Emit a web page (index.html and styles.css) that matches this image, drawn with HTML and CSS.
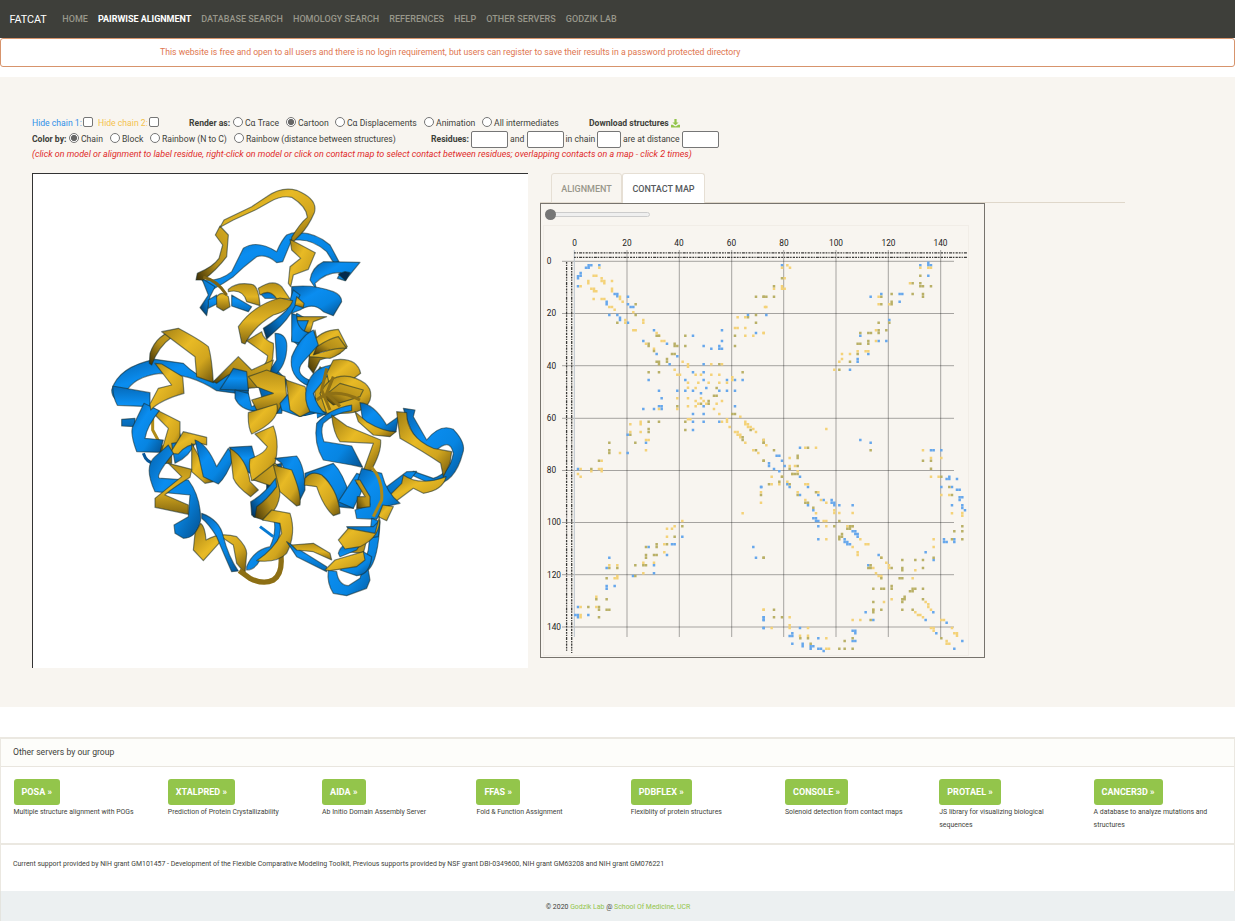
FILE: index.html
```html
<!DOCTYPE html>
<html lang="en">
<head>
<meta charset="utf-8">
<title>FATCAT</title>
<link rel="stylesheet" href="styles.css">
</head>
<body>
<nav class="navbar">
  <a class="brand">FATCAT</a>
  <a>HOME</a><a class="active">PAIRWISE ALIGNMENT</a><a>DATABASE SEARCH</a><a>HOMOLOGY SEARCH</a><a>REFERENCES</a><a>HELP</a><a>OTHER SERVERS</a><a>GODZIK LAB</a>
</nav>
<div class="alert">This website is free and open to all users and there is no login requirement, but users can register to save their results in a password protected directory</div>

<main class="stage">
  <form class="controls">
    <div class="row render">
      <label class="blue">Hide chain 1:<i class="check"></i></label>
      <label class="gold">Hide chain 2:<i class="check"></i></label>
      <b>Render as:</b>
      <label><i class="radio"></i>Cα Trace</label>
      <label><i class="radio on"></i>Cartoon</label>
      <label><i class="radio"></i>Cα Displacements</label>
      <label><i class="radio"></i>Animation</label>
      <label><i class="radio"></i>All intermediates</label>
      <b class="download">Download structures<svg width="9" height="9" viewBox="0 0 16 16"><path fill="#93c54b" d="M6 0h4v6h3.500L8 11 2.500 6H6zM0 10h3l4 3h2l4-3h3v5H0z"/></svg></b>
    </div>
    <div class="row color">
      <b>Color by:</b>
      <label><i class="radio on"></i>Chain</label>
      <label><i class="radio"></i>Block</label>
      <label><i class="radio"></i>Rainbow (N to C)</label>
      <label><i class="radio"></i>Rainbow (distance between structures)</label>
      <b>Residues:</b>
      <i class="box"></i><span>and</span><i class="box"></i><span>in chain</span><i class="box short"></i><span>are at distance</span><i class="box"></i>
    </div>
    <p class="hint">(click on model or alignment to label residue, right-click on model or click on contact map to select contact between residues; overlapping contacts on a map - click 2 times)</p>
  </form>

  <div class="panes">
    <div class="viewer">
      <svg class="protein" viewBox="0 0 1140 1260">
        <defs>
          <linearGradient id="b1" x1="0" y1="0" x2="1" y2="1"><stop offset="0" stop-color="#0561ab"/><stop offset=".35" stop-color="#0a8df0"/><stop offset=".65" stop-color="#0785e2"/><stop offset="1" stop-color="#04508f"/></linearGradient>
          <linearGradient id="b2" x1="0" y1="0" x2="0" y2="1"><stop offset="0" stop-color="#0569b8"/><stop offset=".45" stop-color="#0b90f3"/><stop offset="1" stop-color="#0668b4"/></linearGradient>
          <linearGradient id="b3" x1="1" y1="0" x2="0" y2="1"><stop offset="0" stop-color="#0a8df0"/><stop offset=".6" stop-color="#0674c8"/><stop offset="1" stop-color="#032b4e"/></linearGradient>
          <linearGradient id="g1" x1="0" y1="0" x2="1" y2="1"><stop offset="0" stop-color="#a07d13"/><stop offset=".4" stop-color="#e8ba25"/><stop offset=".7" stop-color="#d1a51e"/><stop offset="1" stop-color="#6e560d"/></linearGradient>
          <linearGradient id="g2" x1="0" y1="0" x2="0" y2="1"><stop offset="0" stop-color="#b68f18"/><stop offset=".5" stop-color="#e2b423"/><stop offset="1" stop-color="#856810"/></linearGradient>
          <linearGradient id="g3" x1="1" y1="0" x2="0" y2="1"><stop offset="0" stop-color="#d5aa20"/><stop offset=".55" stop-color="#b48e19"/><stop offset="1" stop-color="#3b2e06"/></linearGradient>
        </defs>
        <g class="ribbons">
          <!-- far side of the helices -->
          <path fill="url(#b3)" d="M590 400L625 420L625 480L600 500L575 480ZM470 600L520 560L560 600L545 700L500 700ZM600 700L660 640L680 700L640 720ZM500 860L545 850L545 900L500 930Z"/>
          <path fill="url(#g3)" d="M640 600L660 560L700 600L690 700L650 690ZM180 800L215 790L215 850L180 850ZM740 1090L800 1080L790 1120L740 1115Z"/>
          <!-- upper loops -->
          <path fill="url(#b1)" d="M306 300Q360 305 395 275L430 205Q470 178 530 215Q545 180 560 165Q580 155 600 158Q650 160 690 195L717 245L702 250L680 215Q640 180 600 180L575 180L548 245L530 248Q500 220 470 230Q430 260 400 290L370 310L335 330Z"/>
          <path fill="url(#b3)" d="M305 295L345 320L330 350L320 407L300 383L325 345Z"/>
          <path fill="url(#b2)" d="M325 360L350 345L355 370L325 385ZM395 345L455 380L445 395L395 378ZM480 340L525 335L535 355L495 355Z"/>
          <path fill="url(#g1)" d="M360 142L372 120L455 80L500 50Q545 18 590 31Q655 58 643 98Q625 140 600 165L575 190L575 172Q600 130 622 112Q620 80 575 52Q545 45 510 65L470 88L400 120Z"/>
          <path fill="url(#g3)" d="M360 138L385 165L380 230Q350 270 310 300L288 300L292 280Q340 260 357 235L368 195L346 165Z"/>
          <path fill="url(#g2)" d="M385 328Q410 305 455 313Q475 315 480 377L440 365Q430 325 385 335ZM475 325Q520 295 545 320L570 357L530 357Q510 325 480 345ZM350 350Q365 330 385 350L390 380L370 392L350 380Z"/>
          <path class="thread" stroke="#806412" d="M310 292Q350 300 380 345"/>
          <path fill="url(#g1)" d="M570 178L646 218L625 268L580 285L572 320L565 310L570 260L602 235L575 210Z"/>
          <path fill="url(#g2)" d="M590 410L680 410L640 425L630 460L612 455L625 422L590 422Z"/>
          <path fill="url(#g3)" d="M645 450L630 500L625 560L640 580L660 540L720 520L700 500L655 495Z"/>
          <path fill="url(#b1)" d="M575 400L575 485L605 490L630 460Q590 450 590 405Z"/>
          <path fill="url(#b1)" d="M630 300Q635 262 670 245L780 247L735 302L712 295L722 278Q680 275 645 310L650 330Z"/>
          <path fill="#032b4e" d="M715 282L735 275L750 278L737 302Z"/>
          <path fill="url(#b1)" d="M575 320Q640 312 700 335Q725 345 725 365L700 407L670 395Q640 365 600 390L575 400Z"/>
          <path fill="url(#b3)" d="M580 330L600 345Q580 400 540 440L500 477L490 445Q530 420 560 390Z"/>
          <path fill="url(#g2)" d="M590 350L612 370L610 383L585 375Z"/>
          <path fill="url(#g2)" d="M415 440Q460 375 540 354L578 362Q570 392 520 405Q460 440 435 492L425 488Z"/>
          <path fill="url(#b3)" d="M525 460Q565 460 560 510Q555 570 510 595L500 585L530 540Z"/>
          <path fill="url(#g1)" d="M440 482L485 455Q490 480 520 490Q525 560 480 617L440 625L445 580Q500 570 503 527Z"/>
          <path fill="url(#g1)" d="M630 495Q660 450 715 448L742 500Q720 525 690 535L628 530Z"/>
          <path class="gap" d="M650 505L700 480L715 500L660 520Z"/>
          <path fill="url(#g3)" d="M650 500Q690 475 715 470L740 505Q710 500 640 525Z"/>
          <path fill="url(#b1)" d="M640 450L655 495L610 545Q580 580 628 600L625 618Q565 590 575 530Q600 470 640 450Z"/>
          <!-- left shoulder -->
          <path fill="url(#b1)" d="M35 630Q55 560 165 538L250 550Q290 590 340 605L400 565L445 575L445 645L350 632Q270 580 180 580Q100 590 75 640L50 660Q35 650 35 630Z"/>
          <path fill="url(#g3)" d="M150 520Q170 460 235 448L250 460L215 472Q175 500 155 555L148 550Z"/>
          <path fill="url(#g1)" d="M185 455L235 445Q300 480 325 500Q335 530 340 608L290 590L285 530L215 478Z"/>
          <path fill="url(#g3)" d="M340 605L385 560L415 530L455 570L520 540L500 620L440 625L430 575L385 585L350 610Z"/>
          <path fill="url(#b2)" d="M385 590L400 565L440 575L445 632L360 628Z"/>
          <path fill="url(#b2)" d="M65 718L105 715L105 740L65 738ZM38 618L150 638L150 680L52 676Q38 650 38 618Z"/>
          <path class="thread" stroke="#07579a" d="M215 720Q240 745 240 790M130 820Q140 850 165 850"/>
          <path fill="url(#g1)" d="M160 685L240 725L240 770L225 820L180 830L205 745L165 705Z"/>
          <path class="thread" stroke="#b18c18" d="M158 700V750L185 800"/>
          <path fill="url(#b1)" d="M132 670L178 692Q140 740 135 775L190 780L180 817L110 815Q90 760 98 740Z"/>
          <path fill="url(#g1)" d="M165 550L185 552L248 590L252 640Q180 660 152 690L150 672L175 625L215 615Z"/>
          <!-- lower left helix -->
          <path fill="url(#b2)" d="M215 790L290 780Q270 830 225 850Z"/>
          <path fill="url(#g1)" d="M250 755L320 772L320 795Q270 780 235 822L210 820Z"/>
          <path fill="url(#g1)" d="M275 790L340 905L315 910L275 875Z"/>
          <path fill="url(#b1)" d="M205 795L220 820Q155 900 185 895L265 900Q302 950 302 1020Q290 1075 250 1075L225 1060L222 1035L265 1010L270 945L165 935Q130 860 165 830Z"/>
          <path fill="url(#g2)" d="M205 850L275 868L270 892Q210 930 195 945L265 975L265 1003L165 982L165 955L245 890Z"/>
          <path fill="url(#b1)" d="M285 780Q320 790 350 860L385 805L402 830Q380 890 355 912L310 890Z"/>
          <path fill="url(#b2)" d="M388 802L455 798L465 835L450 880L425 865Z"/>
          <path fill="url(#g1)" d="M390 805Q440 835 450 905L475 930L452 950Q410 920 400 895Z"/>
          <path fill="url(#g1)" d="M285 1060L302 1030Q315 1040 318 1080Q360 1055 410 1070Q440 1100 440 1120L435 1180L410 1150L400 1095L370 1075L310 1142L280 1110Z"/>
          <path fill="url(#b1)" d="M305 1000Q360 1020 370 1070Q385 1130 415 1173L395 1175Q375 1130 350 1070Q325 1030 305 1015Z"/>
          <path fill="url(#b1)" d="M440 1160Q460 1110 510 1100Q530 1060 522 1020L540 1030Q550 1090 480 1140Q465 1170 440 1170Z"/>
          <!-- central column -->
          <path fill="url(#b1)" d="M405 630L445 640L455 680L500 660L510 690L470 695Q420 690 405 655Z"/>
          <path fill="url(#g2)" d="M445 590L500 570L555 590L560 650L530 700L470 690L455 660L520 640L470 620Z"/>
          <path fill="url(#b1)" d="M540 670L575 630L640 640L650 700L600 710L545 690Z"/>
          <path fill="url(#g1)" d="M558 600L615 620L640 690L600 710L570 690Z"/>
          <path class="gap" d="M542 705L535 715L542 745L560 780L660 830L650 700L600 712Z"/>
          <path fill="url(#g1)" d="M445 698L465 692L530 672Q545 720 455 762Q443 740 445 698Z"/>
          <path fill="url(#g1)" d="M465 762L520 738Q540 790 525 850Q500 890 455 902Q445 860 450 837Q495 820 502 800Z"/>
          <path fill="url(#g3)" d="M460 900L525 850Q545 860 540 930Q540 990 490 1020L460 1010L460 970Q500 950 520 920Z"/>
          <path fill="url(#b3)" d="M452 965Q490 945 527 895L530 920Q500 960 470 980L465 1012L455 1005Z"/>
          <path class="thread wide" stroke="#aa8516" d="M542 1120Q550 1180 520 1200Q490 1215 450 1195L418 1172"/>
          <path fill="url(#g1)" d="M487 1020L515 990L570 1000Q590 1060 560 1120Q530 1150 470 1142Q520 1110 545 1060L540 1030Z"/>
          <path class="thread" stroke="#087ad2" d="M480 1040L520 1070"/>
          <!-- horizontal helix, right half -->
          <path fill="url(#b1)" d="M525 835L590 828Q615 860 615 930L600 960L570 910L545 850Z"/>
          <path fill="url(#g1)" d="M520 855L575 870Q605 940 600 975L590 978L540 935Z"/>
          <path fill="url(#b1)" d="M615 880L700 850Q730 880 750 950L760 985L710 980Q690 880 650 885L615 915Z"/>
          <path fill="url(#g1)" d="M615 895Q635 870 665 885Q715 930 720 1000L700 1007Q670 980 650 920L613 915Z"/>
          <path fill="url(#b1)" d="M715 965L770 880L800 890L780 945L760 985Z"/>
          <!-- right core -->
          <path fill="url(#b1)" d="M620 620Q640 550 720 555L730 580L680 590L640 640Q650 680 680 705L630 695Q610 660 620 620Z"/>
          <path fill="url(#g1)" d="M700 540Q770 530 782 580L755 600L690 620L680 580Z"/>
          <path fill="url(#g1)" d="M660 640Q690 580 750 590Q825 610 810 660Q795 700 730 700L680 700Z"/>
          <path fill="url(#g3)" d="M670 650L720 610L790 630L780 650L700 675Z"/>
          <path class="thread" stroke="#8e7015" d="M680 565L665 630L690 690M700 590L680 640L720 680M650 660Q700 620 780 660"/>
          <path fill="url(#b1)" d="M780 668Q820 670 860 735L895 710L888 755Q850 765 790 735Z"/>
          <path fill="url(#g1)" d="M765 695L800 725Q850 755 888 755L870 770L820 765L775 725Z"/>
          <path fill="url(#b1)" d="M650 730Q690 685 755 675L755 692Q700 700 670 730Q660 755 672 785L755 798L788 862L755 855L670 840Q640 790 650 730Z"/>
          <path fill="url(#g1)" d="M695 705L740 738L842 780Q845 820 808 880L790 872L820 790L720 785Q700 760 695 705Z"/>
          <path fill="url(#b1)" d="M910 685L945 690L940 710L980 780Q1020 730 1060 748Q1100 790 1088 820Q1065 910 1000 915L935 885L940 874L1000 895Q1050 880 1060 820Q1050 770 1005 815L970 805Q930 760 910 685Z"/>
          <path fill="url(#g1)" d="M890 695L920 698Q920 770 1000 805L1055 815L1050 850L1030 890L1022 850Q970 815 900 775Z"/>
          <path fill="url(#b3)" d="M860 920L920 875L950 874L930 900L880 970L835 985Z"/>
          <path fill="url(#g1)" d="M910 885Q960 920 1038 890Q1030 930 970 940L940 925L880 970L870 945L905 910Z"/>
          <path fill="url(#b1)" d="M785 865L845 880Q860 940 900 970L855 980L830 1018L770 1015L765 990L810 975Q805 930 770 910Z"/>
          <path fill="url(#g3)" d="M765 900L780 900L810 950L810 980L770 986L772 950L795 950Z"/>
          <path class="thread" stroke="#ad8918" d="M815 862Q850 900 845 960L820 1010"/>
          <path fill="url(#g1)" d="M848 975L880 980L860 1022L835 1010Z"/>
          <!-- lower right helix -->
          <path fill="url(#b1)" d="M815 1015L840 1025Q835 1140 805 1170L810 1200L800 1225L740 1247L700 1240Q680 1210 685 1170L710 1175Q715 1215 745 1217L780 1195L805 1110Z"/>
          <path fill="url(#b2)" d="M560 1085L680 1160L680 1175L590 1130ZM715 1120Q725 1080 780 1095L770 1110L720 1130Z"/>
          <path fill="url(#g2)" d="M575 1095L640 1090L690 1120L695 1140L640 1115L590 1110Z"/>
          <path fill="url(#b1)" d="M720 1170L790 1115L815 1130Q810 1185 770 1187Z"/>
          <path fill="url(#g1)" d="M675 1170L705 1140L790 1115L795 1140L770 1160L690 1172Z"/>
          <path fill="url(#b3)" d="M740 1040L820 1040L840 1020L835 1070L770 1080Z"/>
          <path fill="url(#g1)" d="M715 1080L745 1045L825 1060L838 1010Q845 1070 780 1100L735 1107Z"/>
        </g>
      </svg>
    </div>
    <section class="results">
      <div class="tabs"><span class="tab">ALIGNMENT</span><span class="tab current">CONTACT MAP</span></div>
      <div class="map">
        <div class="slider"></div>
        <svg class="plot" width="443" height="431" viewBox="541 225 443 431">
          <rect class="canvas" x="543.500" y="225.500" width="425" height="430"/>
          <path class="grid" d="M627 250V637M679.300 250V637M731.700 250V637M783.700 250V637M836 250V637M888.300 250V637M940.700 250V637M562 261.300H954M562 313.500H954M562 365.700H954M562 418.300H954M562 470.500H954M562 522.500H954M562 574.700H954M562 627H954"/>
          <path class="axis" d="M574.300 250V637"/>
          <g class="sequence"><path d="M574 252.800H967M574 257.400H967M566.600 262V652M571.700 262V653"/></g>
          <g class="ticks x"><text x="574.500" y="245.500">0</text><text x="627" y="245.500">20</text><text x="679" y="245.500">40</text><text x="731.500" y="245.500">60</text><text x="784" y="245.500">80</text><text x="836" y="245.500">100</text><text x="888.500" y="245.500">120</text><text x="940.500" y="245.500">140</text></g>
          <g class="ticks y"><text x="549" y="264">0</text><text x="551.500" y="316.300">20</text><text x="551.500" y="368.500">40</text><text x="551.500" y="421">60</text><text x="551.500" y="473">80</text><text x="554" y="525.300">100</text><text x="554" y="577.500">120</text><text x="554" y="629.700">140</text></g>
          <g id="contacts"></g>
        </svg>
      </div>
    </section>
  </div>
</main>

<section class="servers">
  <header>Other servers by our group</header>
  <div class="cards">
    <div><a class="btn">POSA »</a><p>Multiple structure alignment with POGs</p></div>
    <div><a class="btn">XTALPRED »</a><p>Prediction of Protein Crystallizability</p></div>
    <div><a class="btn">AIDA »</a><p>Ab Initio Domain Assembly Server</p></div>
    <div><a class="btn">FFAS »</a><p>Fold &amp; Function Assignment</p></div>
    <div><a class="btn">PDBFLEX »</a><p>Flexiblity of protein structures</p></div>
    <div><a class="btn">CONSOLE »</a><p>Solenoid detection from contact maps</p></div>
    <div><a class="btn">PROTAEL »</a><p>JS library for visualizing biological sequences</p></div>
    <div><a class="btn">CANCER3D »</a><p>A database to analyze mutations and structures</p></div>
  </div>
</section>
<section class="support">Current support provided by NIH grant GM101457 - Development of the Flexible Comparative Modeling Toolkit, Previous supports provided by NSF grant DBI-0349600, NIH grant GM63208 and NIH grant GM076221</section>
<footer class="footer">© 2020 <a>Godzik Lab</a> @ <a>School Of Medicine, UCR</a></footer>
<script src="contacts.js"></script>
</body>
</html>
```
FILE: styles.css
```css
* { box-sizing: border-box; }
body { margin: 0; height: 921px; overflow: hidden; background: #fff; color: #3e3f3a; font: 8.65px/13px Roboto, sans-serif; }
p { margin: 0; }
i { font-style: normal; flex: none; }

.navbar { display: flex; align-items: center; gap: 10px; height: 38px; padding-left: 9.500px; background: #3e3f3a; color: #98978b; font-size: 9px; font-weight: 500; letter-spacing: .04px; white-space: nowrap; }
.navbar .brand { margin-right: 5.500px; color: #fff; font-size: 10.800px; font-weight: 400; letter-spacing: -.05px; }
.navbar .active { color: #fff; font-weight: 700; letter-spacing: -.02px; }

.alert { height: 29px; padding: 7px 0 0 159px; border: 1px solid #d7946c; border-radius: 3px; color: #e0764f; font-size: 8.670px; white-space: nowrap; }

.stage { height: 630px; margin-top: 10px; padding: 38px 0 0 32px; background: #f8f5f0; }
.controls { height: 58px; white-space: nowrap; }
.row { display: grid; align-items: center; height: 16px; }
.row label { display: flex; align-items: center; }
.row b { font-weight: 700; letter-spacing: -.02px; }
.render { padding-top: 1px; grid-template-columns: 66px 91px 44px 53px 49px 89px 58px 107px 100px; }
.color { grid-template-columns: 37px 41px 40px 84px 197px 40px 39px 17px 38.500px 31.500px 26px 59px 37px; }
.blue { color: #2f8fe8; }
.gold { color: #f4c24d; }
.check { width: 10px; height: 10px; margin: -4px 0 0 .8px; border: 1px solid #767676; border-radius: 2px; background: #fff; }
.radio { width: 10px; height: 10px; margin: -4px 2px 0 0; border: 1px solid #767676; border-radius: 50%; background: #fff; }
.radio.on { background: radial-gradient(circle, #666 0 2.800px, #fff 3.300px); }
.box { width: 37px; height: 17px; border: 1px solid #767676; border-radius: 2px; background: #fff; }
.box.short { width: 24px; }
.download { display: flex; align-items: center; gap: 2px; }
.hint { height: 15px; line-height: 14px; color: #e02a2a; font-size: 8.930px; font-style: italic; }

.panes { display: flex; gap: 12px; }
.viewer { width: 496px; height: 495px; border: solid #333; border-width: 1px 0 0 1px; background: #fff; }
.protein { display: block; width: 380px; height: 420px; margin: 6px 0 0 67px; }
.ribbons path { stroke: #162b2c; stroke-opacity: .55; stroke-width: 3.500; stroke-linejoin: round; }
.ribbons .thread { fill: none; stroke: attr(stroke); stroke-opacity: 1; stroke-width: 9; }
.ribbons .thread[stroke="#806412"] { stroke: #806412; }
.ribbons .thread[stroke="#07579a"] { stroke: #07579a; }
.ribbons .thread[stroke="#b18c18"] { stroke: #b18c18; }
.ribbons .thread[stroke="#aa8516"] { stroke: #8d6f14; }
.ribbons .thread[stroke="#087ad2"] { stroke: #087ad2; }
.ribbons .thread[stroke="#8e7015"] { stroke: #8e7015; }
.ribbons .thread[stroke="#ad8918"] { stroke: #ad8918; }
.ribbons .wide { stroke-width: 16; }
.ribbons .gap { fill: #fff; stroke: none; }

.results { width: 585px; }
.tabs { display: flex; height: 30px; padding-left: 11px; border-bottom: 1px solid #dfd7ca; color: #98978b; font-size: 9px; font-weight: 500; line-height: 30px; }
.tab { width: 71px; height: 30px; border: 1px solid #e6dfd4; border-radius: 3px 3px 0 0; text-align: center; }
.tab.current { width: 83px; border-bottom: 0; background: #fff; color: #55595c; }
.map { width: 445px; height: 455px; border: 1px solid #77736d; }
.slider { position: relative; width: 104px; height: 5px; margin: 8px 0 8px 5px; border: 1px solid #ccc; border-radius: 3px; background: #efefef; }
.slider::before { content: ""; position: absolute; left: -2px; top: -4px; width: 11px; height: 11px; border-radius: 50%; background: #767676; }
.plot { display: block; }
.canvas { fill: none; stroke: #f1ede7; }
.grid { fill: none; stroke: #111; stroke-opacity: .4; stroke-width: .9; }
.axis { fill: none; stroke: #b9c4cc; stroke-width: 1; }
.sequence path { fill: none; stroke: #3b3b38; stroke-width: 1.300; stroke-dasharray: 1.800 1 1.200 1.100 3 .8 1.500 1.200 2.200 1; }
.ticks { fill: #222; font: 8.300px Roboto, sans-serif; text-anchor: middle; }
.contacts { fill: none; stroke-width: 7.500; stroke-linecap: square; }
.chain1 { stroke: #66a7ec; }
.chain2 { stroke: #f4d278; }
.both { stroke: #b9b067; }

.servers { height: 108px; margin-top: 30px; border: 1px solid #ebe8e1; border-width: 2px 1px; }
.servers header { height: 28px; padding: 6px 12px; border-bottom: 1px solid #e9e6df; background: #fdfdfa; line-height: 15px; }
.cards { display: grid; grid-template-columns: repeat(8, 154.300px); padding: 12px 0 0 12.500px; }
.cards > div { padding-right: 30px; }
.btn { display: inline-block; height: 26px; padding: 0 8px; border-radius: 3px; background: #93c54b; color: #fff; font-size: 9px; font-weight: 700; letter-spacing: .03px; line-height: 27px; vertical-align: top; }
.cards p { width: 124px; padding-top: 1px; font-size: 6.920px; line-height: 13px; }
.support { height: 46px; padding: 13px 12px; border-left: 1px solid #ebe8e1; border-right: 1px solid #ebe8e1; font-size: 6.930px; }
.footer { height: 30px; padding-top: 10px; border-left: 1px solid #e4e4df; background: #ecf0f1; font-size: 6.930px; text-align: center; }
.footer a { color: #93c54b; }
```
FILE: contacts.js
```
// Contact pairs per map tile, in thirds of a pixel from the tile's corner.
const tiles = [
  { x: 540, y: 200,
    chain1: "146,196 154,196 138,203 146,203 178,196 122,219 122,227 114,229 114,235 114,259 224,282 232,282 232,289 264,290 264,313 272,321 280,321 200,305 200,313 208,345 232,345 240,353 240,360 264,368 342,391 310,423 381,431 350,462 389,493 412,469 459,407 546,391 546,423 491,438 514,446 538,438 538,446 546,446 491,493 459,517 491,517 491,540 436,540 326,540 357,572 365,595 365,619 365,627 357,619 342,627 310,627 412,572 436,572 459,572 499,564 483,580 538,572 561,572 585,572 561,540 585,540 608,540 585,619 491,619 459,642 491,642 459,665 491,665 538,665 624,345 648,399",
    chain2: "178,203 161,227 169,227 185,235 185,243 193,243 193,250 145,243 145,250 216,243 122,259 154,266 162,266 162,274 169,274 216,266 216,274 161,297 185,297 193,297 240,290 240,297 248,305 208,321 216,321 224,329 256,360 256,368 280,337 310,360 310,368 280,391 287,391 357,407 350,399 365,423 373,423 318,431 342,446 428,485 444,493 444,500 404,509 412,524 420,524 444,548 444,563 412,595 444,595 467,524 483,524 475,548 467,564 514,493 546,493 514,524 538,524 577,532 577,540 561,548 538,548 506,548 483,595 467,603 467,619 444,619 412,627 491,603 499,611 475,611 530,611 546,603 522,627 538,642 546,665 561,658 561,665 444,658 451,658 467,619 357,627 302,665 302,673 271,673 601,650 569,681 616,665 616,673 624,673 624,681 632,681 640,687 593,352 616,352 585,384 593,384 616,384 616,407 640,407 671,399 675,321",
    both: "232,368 287,313 287,345 350,407 357,407 326,431 326,438 342,453 350,485 357,485 357,493 381,477 381,485 396,462 404,462 404,431 404,438 412,438 436,407 436,438 326,517 357,517 412,619 436,665 357,665 326,665 326,687 483,611 506,603 506,611 522,587 530,587 530,564 538,493 577,642 585,642 585,407 585,438 648,290 671,290 648,345 648,368 608,517 624,352" },
  { x: 760, y: 200,
    chain1: "66,196 19,345 481,196 505,188 505,196 513,196 505,227 332,290 364,282 419,282 427,282 419,305 388,360 301,407 379,423 356,423 325,462 293,477 293,485 270,509",
    chain2: "66,203 82,196 90,203 74,235 66,259 66,266 74,266 42,266 19,321 11,399 481,203 505,203 513,203 450,250 356,290 356,313 388,313 348,391 348,423 246,462 270,462 246,477 238,485 223,509 293,454 317,454 325,454 199,687",
    both: "11,290 19,290 42,290 42,259 66,235 481,227 458,250 481,250 481,259 489,259 513,259 458,282 489,282 489,290 395,282 364,290 395,305 395,313 364,313 388,368 356,368 356,391 356,399 379,391 301,399 325,399 333,399 325,423 325,431 293,431 301,431 293,462 270,485 238,509" },
  { x: 540, y: 430,
    chain1: "263,14 318,38 263,69 114,117 459,0 663,171 427,320 396,343 404,343 381,375 326,351 208,383 200,414 342,406 342,430 279,438 200,468 200,476 224,468 114,531 106,555 114,555 114,562 145,555 640,351 648,383 671,562 671,570 671,594",
    chain2: "302,6 318,30 326,30 318,61 240,69 185,92 122,117 177,117 185,117 185,124 154,124 114,132 122,140 271,6 593,6 585,6 593,14 601,14 601,22 616,38 640,61 655,69 663,187 663,218 608,250 427,273 404,289 396,296 381,296 381,320 373,343 373,367 310,398 342,398 208,406 232,406 232,438 232,445 224,445 310,430 169,500 122,531 122,555 122,562 169,531 671,539 648,6",
    both: "208,38 286,38 208,61 208,69 177,92 154,117 271,14 326,6 436,0 608,22 608,30 632,0 671,30 671,38 648,61 671,92 663,195 427,289 404,320 350,343 350,351 318,351 381,343 318,375 318,383 342,375 350,375 318,406 310,406 286,406 208,414 232,414 200,445 286,438 169,508 200,508 145,531 177,531 177,539 200,539 208,539 177,562 671,383" },
  { x: 760, y: 430,
    chain1: "301,30 332,38 120,53 50,77 58,77 66,92 74,108 27,100 27,108 42,117 58,124 120,140 144,171 89,171 82,163 4,171 175,195 120,195 191,210 215,210 215,218 223,218 223,226 238,226 278,226 144,226 160,241 160,265 168,265 168,273 175,273 175,289 175,328 278,304 286,304 286,312 293,312 293,320 254,328 254,336 262,336 262,343 270,343 356,375 325,406 513,61 521,61 544,61 568,140 568,147 560,147 591,147 544,171 576,171 591,179 599,179 599,202 607,202 599,210 576,226 607,226 607,234 615,241 583,328 583,336 552,328 552,336 560,336 497,367 521,390 317,547 340,570 286,602 286,610 278,602 278,633 286,633 520,547 497,570 560,578 529,610 607,633 583,656 11,562 11,570 11,594 120,594 97,610 89,618 97,618 97,641 175,625 128,641 128,649 152,649 160,649 152,656 175,656 183,656 191,663",
    chain2: "19,46 11,30 136,53 168,53 89,84 89,108 105,108 113,124 35,140 66,140 58,163 35,163 82,155 97,132 144,163 136,163 113,187 175,187 183,210 199,218 136,210 168,250 223,241 223,249 238,249 278,249 191,273 199,273 199,289 199,328 262,289 278,289 301,328 317,343 325,343 278,351 293,367 293,375 364,383 379,398 387,406 387,414 340,414 348,430 356,438 364,438 489,61 544,84 513,84 513,140 536,140 544,195 568,195 576,250 607,249 607,257 521,328 521,351 466,421 458,445 395,508 372,516 497,516 505,523 505,531 513,539 466,547 474,555 481,555 489,562 544,570 552,570 576,594 583,610 591,610 591,617 521,594 513,594 521,602 560,633 560,641 568,641 340,539 278,570 301,570 11,539 89,562 89,586 89,594 35,594 144,594 199,625 199,656 207,656 144,617 120,617",
    both: "11,38 42,61 11,92 144,53 113,77 113,84 113,108 89,116 97,132 105,132 66,140 27,163 58,155 89,163 113,132 168,187 113,195 136,218 144,218 160,233 238,273 223,289 270,289 278,289 262,296 270,296 246,312 238,320 246,320 238,328 364,383 395,414 325,414 332,406 332,414 364,445 340,476 364,476 372,476 395,468 395,476 340,516 340,539 340,547 364,539 332,570 427,390 466,390 427,414 427,421 419,445 427,445 489,390 489,414 489,476 458,476 466,476 450,484 458,484 434,500 434,508 427,508 427,516 427,539 458,539 489,508 332,61 489,92 513,92 513,116 544,140 568,171 576,195 583,304 607,289 607,304 607,328 576,328 11,383 42,539 42,562 66,562 121,625 144,625 152,641 254,633 238,656 254,656 278,656 278,625 521,383 544,625" }
];

const layer = document.getElementById("contacts");
for (const tile of tiles) {
  const group = document.createElementNS("http://www.w3.org/2000/svg", "g");
  group.setAttribute("class", "contacts");
  group.setAttribute("transform", `translate(${tile.x} ${tile.y}) scale(.3333)`);
  for (const kind of ["chain1", "chain2", "both"]) {
    const path = document.createElementNS("http://www.w3.org/2000/svg", "path");
    path.setAttribute("class", kind);
    path.setAttribute("d", tile[kind].split(" ").map(p => `M${p}h0`).join(""));
    group.append(path);
  }
  layer.append(group);
}
```
